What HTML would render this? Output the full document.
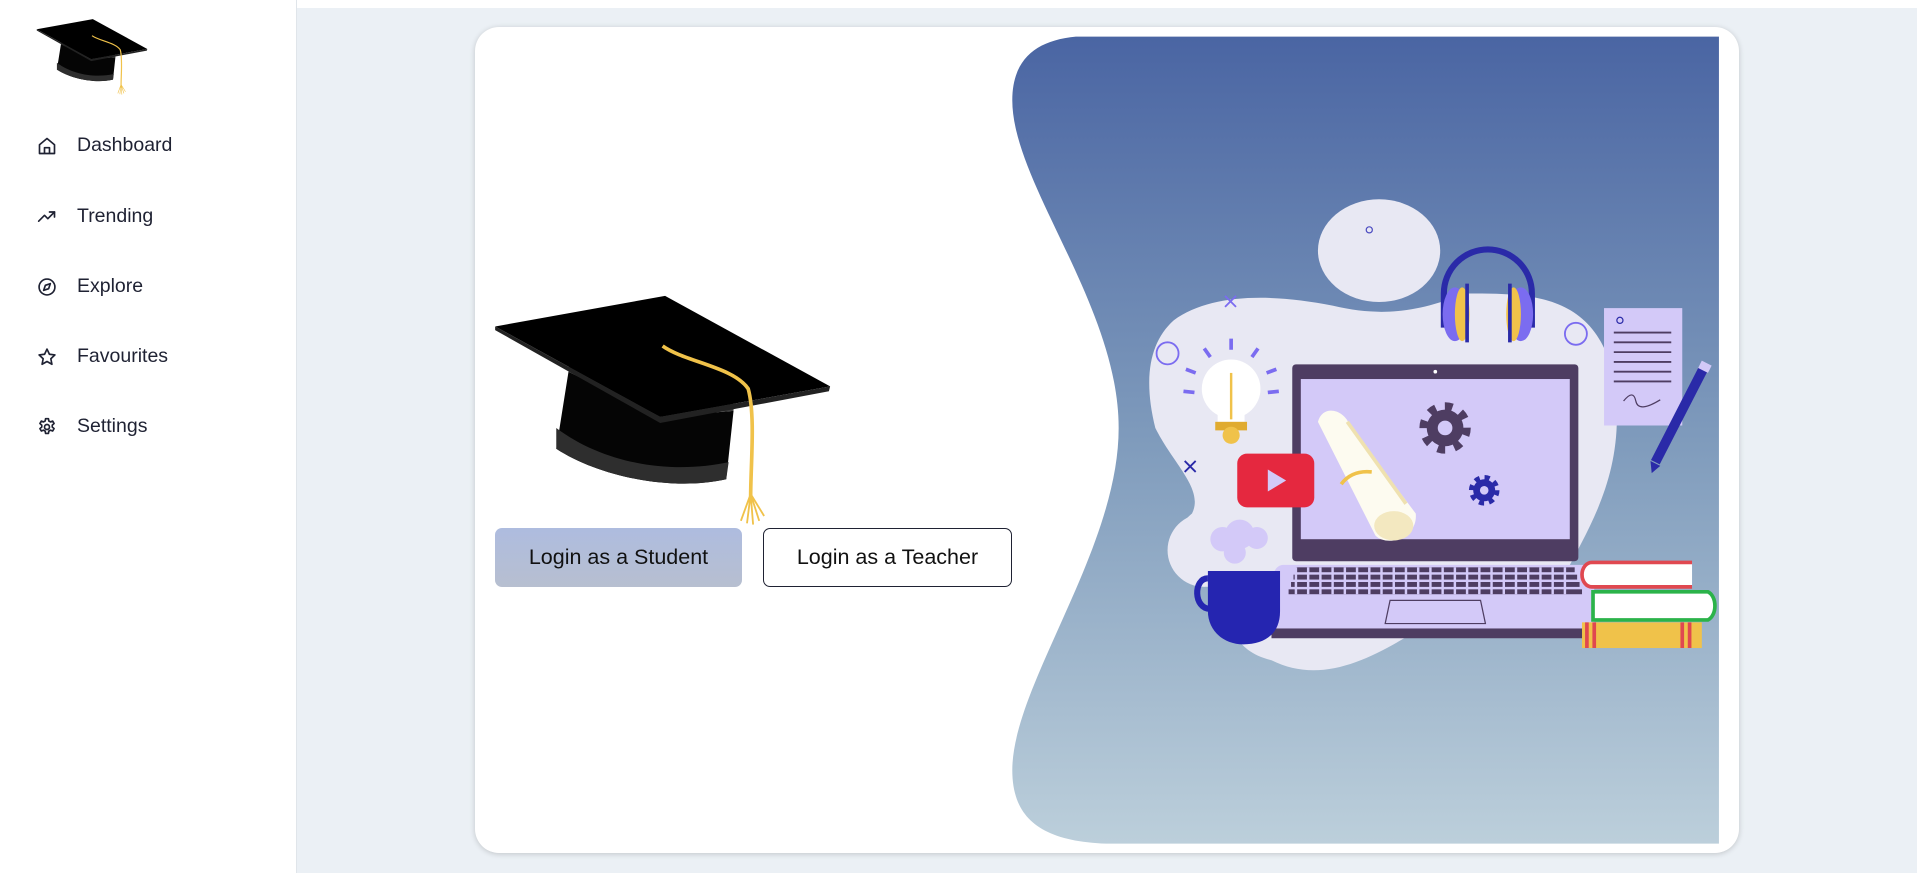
<!DOCTYPE html>
<html><head><meta charset="utf-8"><style>
html,body{margin:0;padding:0;width:1917px;height:873px;overflow:hidden;background:#ebf0f5;font-family:"Liberation Sans",sans-serif}
.side{position:absolute;left:0;top:0;width:296px;height:873px;background:#fff;border-right:1px solid #e0e5ea}
.topstrip{position:absolute;left:297px;top:0;right:0;height:8px;background:#fff}
.card{position:absolute;left:475px;top:27px;width:1264px;height:826px;background:#fff;border-radius:24px;box-shadow:0 1px 6px rgba(0,0,0,.18)}
.nav{position:absolute;left:37px;display:flex;align-items:center;font-size:19.5px;color:#1f2233}
.nav svg{width:20px;height:20px;margin-right:20px}
.btn{position:absolute;top:528px;height:59px;border-radius:7px;font-size:21.5px;display:flex;align-items:center;justify-content:center;color:#111;box-sizing:border-box}
#art{position:absolute;left:0;top:0;width:1917px;height:873px}
</style></head><body>
<div class="side"></div>
<div class="topstrip"></div>
<div class="card"></div>
<div class="nav" style="top:134px"><svg viewBox="0 0 24 24" fill="none" stroke="#1f2233" stroke-width="2" stroke-linejoin="round"><path d="M3 10.5 12 3l9 7.5V21H3z"/><path d="M9 21v-7h6v7"/></svg>Dashboard</div>
<div class="nav" style="top:205px"><svg viewBox="0 0 24 24" fill="none" stroke="#1f2233" stroke-width="2" stroke-linecap="round" stroke-linejoin="round"><path d="M2 17l7-7 4 4 8-8"/><path d="M15 6h6v6"/></svg>Trending</div>
<div class="nav" style="top:275px"><svg viewBox="0 0 24 24" fill="none" stroke="#1f2233" stroke-width="2" stroke-linejoin="round"><circle cx="12" cy="12" r="9.5"/><path d="M16 8l-2 6-6 2 2-6z"/></svg>Explore</div>
<div class="nav" style="top:345px"><svg viewBox="0 0 24 24" fill="none" stroke="#1f2233" stroke-width="2" stroke-linejoin="round"><path d="M12 2.5l2.9 6.2 6.6.8-4.9 4.6 1.3 6.6L12 17.4l-5.9 3.3 1.3-6.6L2.5 9.5l6.6-.8z"/></svg>Favourites</div>
<div class="nav" style="top:415px"><svg viewBox="0 0 24 24" fill="none" stroke="#1f2233" stroke-width="2" stroke-linejoin="round"><circle cx="12" cy="12" r="3"/><path d="M10.3 2h3.4l.5 2.8 2 1.1 2.6-1 1.7 2.9-2.2 1.9v2.3l2.2 1.9-1.7 2.9-2.6-1-2 1.1-.5 2.8h-3.4l-.5-2.8-2-1.1-2.6 1-1.7-2.9 2.2-1.9V9.7L3.5 7.8l1.7-2.9 2.6 1 2-1.1z"/></svg>Settings</div>

<svg id="art" viewBox="0 0 1568 714" preserveAspectRatio="none">
<defs>
<linearGradient id="g" x1="0" y1="0" x2="0" y2="1"><stop offset="0" stop-color="#4a65a3"/><stop offset="0.5" stop-color="#7f9bbc"/><stop offset="1" stop-color="#bccfdb"/></linearGradient>
<g id="cap">
<path d="M465 304 L455 367 C490 390 550 402 594 392 L600 336 L540 341 Z" fill="#050505"/>
<path d="M455 350 L455 367 C490 390 550 402 594 392 L596 378 C550 388 495 380 455 350Z" fill="#2e2e2e"/>
<path d="M465 304 L540 341 L600 336 L600 328 L540 333 L466 296Z" fill="#3c3c3c"/>
<path d="M405 267 L544 242 L679 316 L540 341 Z" fill="#000"/>
<path d="M405 267 L540 341 L679 316 L678 320 L540 346 L405 270Z" fill="#222"/>
<path d="M542 283 C560 296 600 300 612 318 C618 340 614 380 614 406" fill="none" stroke="#f0c24a" stroke-width="3"/>
<path d="M614 404 L606 426 M614 404 L611 428 M614 404 L616 429 M614 404 L621 426 M614 404 L625 422" stroke="#f0c24a" stroke-width="1.5"/>
</g>
</defs>
<use href="#cap"/>
<use href="#cap" transform="translate(-103.6 -64.2) scale(0.33)"/>

<path d="M880 30 L1406 30 L1406 690 L905 690 C850 688 828 668 828 630 C828 560 915 450 915 350 C915 250 828 150 828 82 C828 48 848 33 880 30 Z" fill="url(#g)"/>

<ellipse cx="1128" cy="205" rx="50" ry="42" fill="#e8e8f3"/>
<path d="M960 262 C990 240 1040 240 1090 250 C1140 262 1170 250 1200 240 C1250 240 1300 240 1318 300 C1335 380 1300 430 1280 470 C1260 510 1200 520 1160 515 C1120 540 1080 560 1040 540 C1000 530 1010 500 990 480 C960 480 950 440 975 420 C985 400 960 380 945 350 C935 310 940 280 960 262Z" fill="#e8e8f3"/>
<ellipse cx="985" cy="450" rx="30" ry="30" fill="#e8e8f3"/>
<circle cx="1120" cy="188" r="2.5" fill="none" stroke="#4a4ac0"/>
<circle cx="955" cy="289" r="9" fill="none" stroke="#7b6cf0" stroke-width="1.5"/>
<circle cx="1289" cy="273" r="9" fill="none" stroke="#7b6cf0" stroke-width="1.5"/>
<path d="M1002 242l9 9M1011 242l-9 9" stroke="#7b6cf0" stroke-width="1.5"/>
<path d="M969 377l9 9M978 377l-9 9" stroke="#2a2aa8" stroke-width="1.5"/>

<path d="M1181 268 V240 A36 36 0 0 1 1253 240 V268" fill="none" stroke="#2a2aa8" stroke-width="5"/>
<ellipse cx="1190" cy="257" rx="10" ry="22" fill="#7b6cf0"/><ellipse cx="1196" cy="257" rx="6" ry="22" fill="#f0c24a"/>
<ellipse cx="1244" cy="257" rx="10" ry="22" fill="#7b6cf0"/><ellipse cx="1238" cy="257" rx="6" ry="22" fill="#f0c24a"/>
<path d="M1200 232v48M1235 232v48" stroke="#2a2aa8" stroke-width="3"/>

<rect x="1312" y="252" width="64" height="96" fill="#d3c9f8"/>
<circle cx="1325" cy="262" r="2.5" fill="none" stroke="#2a2aa8"/>
<path d="M1320 272h47M1320 280h47M1320 288h47M1320 296h47M1320 304h47M1320 312h47" stroke="#4e3d62" stroke-width="1.5"/>
<path d="M1328 328 q8 -10 10 0 t20 -1" fill="none" stroke="#4e3d62"/>
<path d="M1393 302 L1354 378" stroke="#2a2aa8" stroke-width="8"/>
<path d="M1396 297 L1393 303" stroke="#d3c9f8" stroke-width="9"/>
<path d="M1350 377 l8 4 -7 6z" fill="#2a2aa8"/>

<path d="M1007 277v9M985 285l5 7M1029 285l-5 7M970 302l8 3M1044 302l-8 3M968 320l9 1M1046 320l-9 1" stroke="#7b6cf0" stroke-width="3"/>
<circle cx="1007" cy="318" r="24" fill="#fff"/>
<rect x="996" y="330" width="22" height="15" fill="#fff"/>
<path d="M1007 305v38" stroke="#f0c24a" stroke-width="2"/>
<rect x="994" y="345" width="26" height="7" fill="#e0ab30"/>
<circle cx="1007" cy="356" r="7" fill="#f0c24a"/>

<rect x="1042" y="462" width="262" height="58" rx="8" fill="#d3c9f8"/>
<rect x="1040" y="514" width="266" height="8" fill="#4e3d62"/>
<g fill="#4e3d62">
<rect x="1060" y="464" width="228" height="4"/><rect x="1058" y="470" width="232" height="4"/><rect x="1056" y="476" width="236" height="4"/><rect x="1054" y="482" width="240" height="4"/>
</g>
<path d="M1060 464v22M1070 464v22M1080 464v22M1090 464v22M1100 464v22M1110 464v22M1120 464v22M1130 464v22M1140 464v22M1150 464v22M1160 464v22M1170 464v22M1180 464v22M1190 464v22M1200 464v22M1210 464v22M1220 464v22M1230 464v22M1240 464v22M1250 464v22M1260 464v22M1270 464v22M1280 464v22" stroke="#d3c9f8" stroke-width="2"/>
<path d="M1137 491 H1211 L1215 510 H1133 Z" fill="none" stroke="#4e3d62"/>
<rect x="1057" y="298" width="234" height="161" rx="3" fill="#4e3d62"/>
<rect x="1064" y="310" width="220" height="131" fill="#d3c9f8"/>
<circle cx="1174" cy="304" r="1.5" fill="#fff"/>
<circle cx="1182" cy="350" r="17" fill="none" stroke="#4e3d62" stroke-width="8" stroke-dasharray="6 7.3"/>
<circle cx="1182" cy="350" r="15" fill="#4e3d62"/><circle cx="1182" cy="350" r="6" fill="#d3c9f8"/>
<circle cx="1214" cy="401" r="10" fill="none" stroke="#2a2aa8" stroke-width="5" stroke-dasharray="4 3.85"/>
<circle cx="1214" cy="401" r="9" fill="#2a2aa8"/><circle cx="1214" cy="401" r="3.5" fill="#d3c9f8"/>
<path d="M1078 345 C1082 330 1100 335 1104 348 L1158 420 C1160 440 1135 448 1125 438 Z" fill="#fdfbf0"/>
<path d="M1102 345 L1150 412" stroke="#efe1b0" stroke-width="3"/>
<ellipse cx="1140" cy="430" rx="16" ry="12" fill="#f3e8c0"/>
<path d="M1097 396 C1103 388 1112 385 1122 386" fill="none" stroke="#f0c24a" stroke-width="3"/>
<rect x="1012" y="371" width="63" height="44" rx="8" fill="#e5283f"/>
<path d="M1037 384 L1052 393 L1037 402Z" fill="#d3c9f8"/>
<circle cx="1000" cy="441" r="10" fill="#d3c9f8"/><circle cx="1014" cy="437" r="12" fill="#d3c9f8"/><circle cx="1028" cy="440" r="9" fill="#d3c9f8"/><circle cx="1010" cy="452" r="9" fill="#d3c9f8"/>
<path d="M988 473 C976 473 976 498 990 498" fill="none" stroke="#2525b0" stroke-width="5"/>
<path d="M988 467 H1047 V500 C1047 518 1035 527 1017 527 C1000 527 988 515 988 500Z" fill="#2525b0"/>
<rect x="1294" y="509" width="98" height="21" fill="#f0c24a"/>
<path d="M1298 509v21M1304 509v21M1376 509v21M1382 509v21" stroke="#e04850" stroke-width="3"/>
<path d="M1303 484 H1397 a8 12 0 0 1 0 23 H1303 Z" fill="#fff" stroke="#2bb34a" stroke-width="3"/>
<path d="M1384 460 H1302 a8 10 0 0 0 0 20 H1384" fill="#fff" stroke="#e04850" stroke-width="3"/>
</svg>

<div class="btn" style="left:495px;width:247px;background:linear-gradient(#aebcdf,#b7bfd0);">Login as a Student</div>
<div class="btn" style="left:763px;width:249px;border:1.5px solid #1f2233;background:#fff">Login as a Teacher</div>
</body></html>
